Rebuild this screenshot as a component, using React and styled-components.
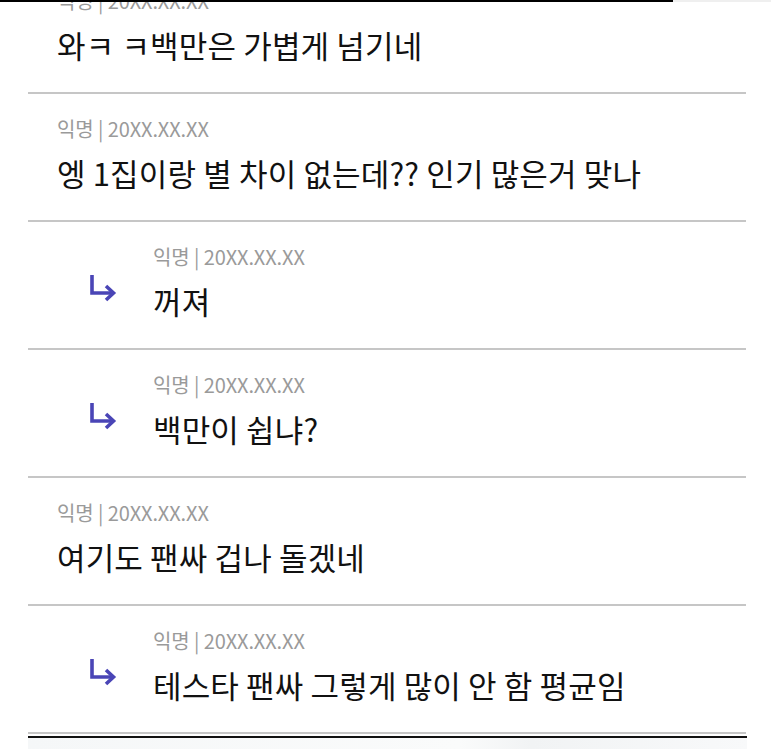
import React from 'react';
import styled, { createGlobalStyle } from 'styled-components';

const GlobalStyle = createGlobalStyle`
  html, body {
    margin: 0;
    padding: 0;
    background: #ffffff;
    overflow: hidden;
  }
  body {
    font-family: 'Noto Sans CJK KR', 'Noto Sans', sans-serif;
  }
`

const Page = styled.div`
  position: relative;
  width: 771px;
  height: 749px;
  overflow: hidden;
  background: #ffffff;
`

// thin scroll indicator strip on the very top edge
const TopStrip = styled.div`
  position: absolute;
  top: 0;
  left: 0;
  right: 0;
  height: 2px;
  display: flex;
  z-index: 2;
`

const StripPart = styled.div`
  height: 100%;
  width: ${(props) => props.width || 'auto'};
  flex: ${(props) => (props.grow ? 1 : 'none')};
  background: ${(props) => props.color};
`

const List = styled.ul`
  list-style: none;
  margin: -34px 25px 0 28px;
  padding: 0;
`

const Row = styled.li`
  display: flex;
  align-items: flex-start;
  height: 128px;
  box-sizing: border-box;
  padding: 23px 0 0 ${(props) => (props.reply ? '60px' : '29px')};
  border-bottom: 2px solid #c6c6c6;
`

const ReplyArrow = styled.div`
  width: 30px;
  height: 30px;
  margin: 29px 35px 0 0;
  flex: none;
`

const Body = styled.div`
  display: flex;
  flex-direction: column;
`

const Meta = styled.span`
  font-size: 20px;
  line-height: 24px;
  color: #9a9a9a;
  letter-spacing: -0.1px;
`

const Content = styled.p`
  margin: 11px 0 0 0;
  font-size: 31px;
  line-height: 42px;
  font-weight: 400;
  color: #111111;
  letter-spacing: 0.15px;
`

const Footer = styled.div`
  margin: 2px 24px 0 28px;
  height: 30px;
  border-top: 2px solid #111111;
  background: linear-gradient(90deg, #f5f7f8 0%, #fafbfb 60%, #f1f3f4 70%, #f8f9fa 100%);
`

const Arrow = () => (
  <svg width="30" height="30" viewBox="0 0 30 30" fill="none">
    <path d="M4 1 V19 H25" stroke="#4a45b6" strokeWidth="3.6" strokeLinejoin="miter" />
    <path d="M18 12 L25.5 19 L18 26" stroke="#4a45b6" strokeWidth="3.6" strokeLinecap="butt" strokeLinejoin="miter" />
  </svg>
)

const comments = [
  { text: '와ㅋ ㅋ백만은 가볍게 넘기네' },
  { text: '엥 1집이랑 별 차이 없는데?? 인기 많은거 맞나' },
  { text: '꺼져', reply: true },
  { text: '백만이 쉽냐?', reply: true },
  { text: '여기도 팬싸 겁나 돌겠네' },
  { text: '테스타 팬싸 그렇게 많이 안 함 평균임', reply: true },
]

export default function App() {
  return (
    <Page>
      <GlobalStyle />
      <TopStrip>
        <StripPart width="673px" color="#000000" />
        <StripPart grow color="#efefef" />
      </TopStrip>
      <List>
        {comments.map((item, i) => (
          <Row key={i} reply={item.reply}>
            {item.reply && (
              <ReplyArrow>
                <Arrow />
              </ReplyArrow>
            )}
            <Body>
              <Meta>익명 | 20XX.XX.XX</Meta>
              <Content>{item.text}</Content>
            </Body>
          </Row>
        ))}
      </List>
      <Footer />
    </Page>
  )
}
